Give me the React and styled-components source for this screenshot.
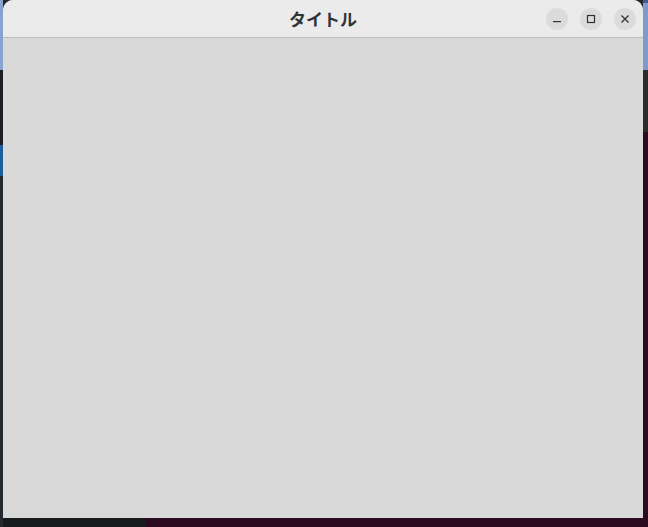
import styled, { createGlobalStyle } from "styled-components";

const GlobalStyle = createGlobalStyle`
  html, body {
    margin: 0;
    padding: 0;
    background: #22272b;
  }
  * {
    box-sizing: border-box;
  }
`;

const Desktop = styled.div`
  width: 648px;
  height: 527px;
  overflow: hidden;
  display: flex;
  align-items: flex-start;
  padding-left: 3px;
  background:
    linear-gradient(to bottom, #86a4cc 0 70px, #1b1f23 70px 145px, #1d5f9c 145px 176px, #23292d 176px) left top / 3px 100% no-repeat,
    linear-gradient(to bottom, #3f5e8c 0 3px, #7d9ccb 3px 70px, #2a2b2c 70px 132px, #2c0a1f 132px) right top / 5px 100% no-repeat,
    linear-gradient(to right, #171b1c 0 145px, #2c0a1f 145px) left bottom / 100% 9px no-repeat,
    #22272b;
`;

const Window = styled.div`
  width: 640px;
  height: 518px;
  display: flex;
  flex-direction: column;
  border-radius: 10px 10px 0 0;
  overflow: hidden;
  background: #d9d9d9;
`;

const HeaderBar = styled.div`
  height: 38px;
  flex-shrink: 0;
  display: grid;
  grid-template-columns: 1fr auto 1fr;
  align-items: center;
  background: #ebebeb;
  border-bottom: 1px solid #bdbdbd;
  padding: 0 7px 0 7px;
`;

const Title = styled.h1`
  grid-column: 2;
  margin: 0;
  font-family: "Noto Sans CJK JP", "Noto Sans", sans-serif;
  font-size: 17px;
  font-weight: 700;
  color: #2e3436;
  line-height: 1;
  padding-bottom: 1px;
`;

const Controls = styled.div`
  grid-column: 3;
  justify-self: end;
  display: flex;
  gap: 12px;
`;

const ControlButton = styled.button`
  width: 22px;
  height: 22px;
  border: none;
  border-radius: 50%;
  background: #dbdbdb;
  color: #2e3436;
  padding: 0;
  display: flex;
  align-items: center;
  justify-content: center;
  cursor: pointer;
`;

const Content = styled.div`
  flex: 1;
  background: #d9d9d9;
`;

function MinimizeIcon() {
  return (
    <svg width="16" height="16" viewBox="0 0 16 16">
      <rect x="4" y="10" width="8" height="1.2" fill="currentColor" />
    </svg>
  );
}

function MaximizeIcon() {
  return (
    <svg width="16" height="16" viewBox="0 0 16 16">
      <rect x="4.5" y="4.5" width="7" height="7" fill="none" stroke="currentColor" strokeWidth="1.2" />
    </svg>
  );
}

function CloseIcon() {
  return (
    <svg width="16" height="16" viewBox="0 0 16 16">
      <path d="M4.5 4.5 L11.5 11.5 M11.5 4.5 L4.5 11.5" stroke="currentColor" strokeWidth="1.3" />
    </svg>
  );
}

export default function App() {
  return (
    <>
      <GlobalStyle />
      <Desktop>
        <Window>
          <HeaderBar>
            <Title>タイトル</Title>
            <Controls>
              <ControlButton aria-label="minimize"><MinimizeIcon /></ControlButton>
              <ControlButton aria-label="maximize"><MaximizeIcon /></ControlButton>
              <ControlButton aria-label="close"><CloseIcon /></ControlButton>
            </Controls>
          </HeaderBar>
          <Content />
        </Window>
      </Desktop>
    </>
  );
}
